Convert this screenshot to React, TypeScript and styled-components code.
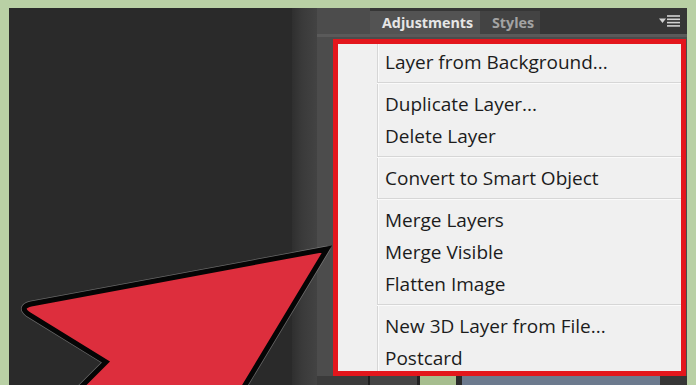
import styled, { createGlobalStyle } from "styled-components";

const GlobalStyle = createGlobalStyle`
  html, body {
    margin: 0;
    padding: 0;
    background: #b9d0a5;
  }
  * {
    box-sizing: border-box;
  }
`;

const Frame = styled.div`
  position: relative;
  display: flex;
  width: 696px;
  height: 385px;
  padding: 8px 9px 0 9px;
  overflow: hidden;
  background: #b9d0a5;
  font-family: "Open Sans", "Noto Sans", sans-serif;
`;

const Canvas = styled.div`
  width: 283px;
  background: #2a2a2a;
`;

const Dock = styled.div`
  width: 25px;
  background: linear-gradient(to right, #2f2f2f, #3a3a3a 40%, #434343);
`;

const Panel = styled.div`
  flex: 1;
  display: flex;
  flex-direction: column;
  background: #4c4c4c;
`;

const TabBar = styled.div`
  display: flex;
  height: 26px;
  padding-left: 53px;
`;

const TabStrip = styled.div`
  flex: 1;
  display: flex;
  align-items: flex-end;
  background: #363636;
  padding-right: 7px;
`;

const Tab = styled.div<{ $active?: boolean; $width: number }>`
  width: ${(p) => p.$width}px;
  height: 23px;
  display: flex;
  align-items: center;
  padding-left: 12px;
  font-size: 14.3px;
  font-weight: 700;
  color: ${(p) => (p.$active ? "#e6e6e6" : "#a3a3a3")};
  background: ${(p) => (p.$active ? "#535353" : "#434343")};
`;

const MenuButton = styled.div`
  margin-left: auto;
  align-self: center;
  display: flex;
`;

const TabRule = styled.div`
  height: 3px;
  background: #5a5a5a;
`;

const Body = styled.div`
  flex: 1;
  display: flex;
  flex-direction: column;
`;

const Menu = styled.div`
  margin: 2px 1px 0 16px;
  height: 337px;
  border: 5px solid #e3161c;
  padding-top: 2px;
  overflow: hidden;
  display: flex;
  flex-direction: column;
  background:
    linear-gradient(
      to right,
      transparent 39px,
      #d6d6d6 39px,
      #d6d6d6 40px,
      #fafafa 40px,
      #fafafa 41px,
      transparent 41px
    ),
    #f0f0f0;
`;

const Item = styled.div`
  flex: none;
  height: 32px;
  line-height: 32px;
  padding-left: 47px;
  font-size: 19px;
  color: #1c1c1c;
  white-space: nowrap;
`;

const Separator = styled.div`
  flex: none;
  height: 1px;
  margin: 4px 0 5px 39px;
  background: #d6d6d6;
  box-shadow: 0 1px 0 #fafafa;
`;

const LayerRow = styled.div`
  flex: 1;
  display: flex;
`;

const Cell = styled.div<{ $w: number; $bg: string }>`
  width: ${(p) => p.$w}px;
  background: ${(p) => p.$bg};
`;

const ArrowLayer = styled.svg`
  position: absolute;
  left: 0;
  top: 0;
  pointer-events: none;
`;

const groups = [
  ["Layer from Background..."],
  ["Duplicate Layer...", "Delete Layer"],
  ["Convert to Smart Object"],
  ["Merge Layers", "Merge Visible", "Flatten Image"],
  ["New 3D Layer from File...", "Postcard"],
];

const cells: [number, string][] = [
  [51, "#3b3b3b"],
  [2, "#1f1f1f"],
  [47, "#454545"],
  [3, "#222222"],
  [36, "#a6bd8e"],
  [6, "#2a2a2a"],
  [198, "#6c7a8e"],
  [27, "#363636"],
];

const arrowPath =
  "M327 249 L31 304 Q19 307 28 314 L106 362 L68 400 L236 400 Z";

export default function App() {
  return (
    <>
      <GlobalStyle />
      <Frame>
        <Canvas />
        <Dock />
        <Panel>
          <TabBar>
            <TabStrip>
              <Tab $active $width={110}>Adjustments</Tab>
              <Tab $width={60}>Styles</Tab>
              <MenuButton>
                <svg width="21" height="12" viewBox="0 0 21 12">
                  <path d="M0 3.5 H7 L3.5 8 Z" fill="#d2d2d2" />
                  <g stroke="#d2d2d2" strokeWidth="1.6">
                    <line x1="8" y1="1" x2="21" y2="1" />
                    <line x1="8" y1="4.3" x2="21" y2="4.3" />
                    <line x1="8" y1="7.6" x2="21" y2="7.6" />
                    <line x1="8" y1="10.9" x2="21" y2="10.9" />
                  </g>
                </svg>
              </MenuButton>
            </TabStrip>
          </TabBar>
          <TabRule />
          <Body>
            <Menu>
              {groups.map((g, i) => (
                <div key={i} style={{ display: "contents" }}>
                  {i > 0 && <Separator />}
                  {g.map((label) => (
                    <Item key={label}>{label}</Item>
                  ))}
                </div>
              ))}
            </Menu>
            <LayerRow>
              {cells.map(([w, bg], i) => (
                <Cell key={i} $w={w} $bg={bg} />
              ))}
            </LayerRow>
          </Body>
        </Panel>
        <ArrowLayer width="696" height="385" viewBox="0 0 696 385">
          <path
            d={arrowPath}
            fill="none"
            stroke="#9a9a9a"
            strokeOpacity="0.55"
            strokeWidth="6.5"
            strokeLinejoin="round"
          />
          <path
            d={arrowPath}
            fill="#dd2e3d"
            stroke="#050505"
            strokeWidth="5"
            strokeLinejoin="miter"
          />
        </ArrowLayer>
      </Frame>
    </>
  );
}
